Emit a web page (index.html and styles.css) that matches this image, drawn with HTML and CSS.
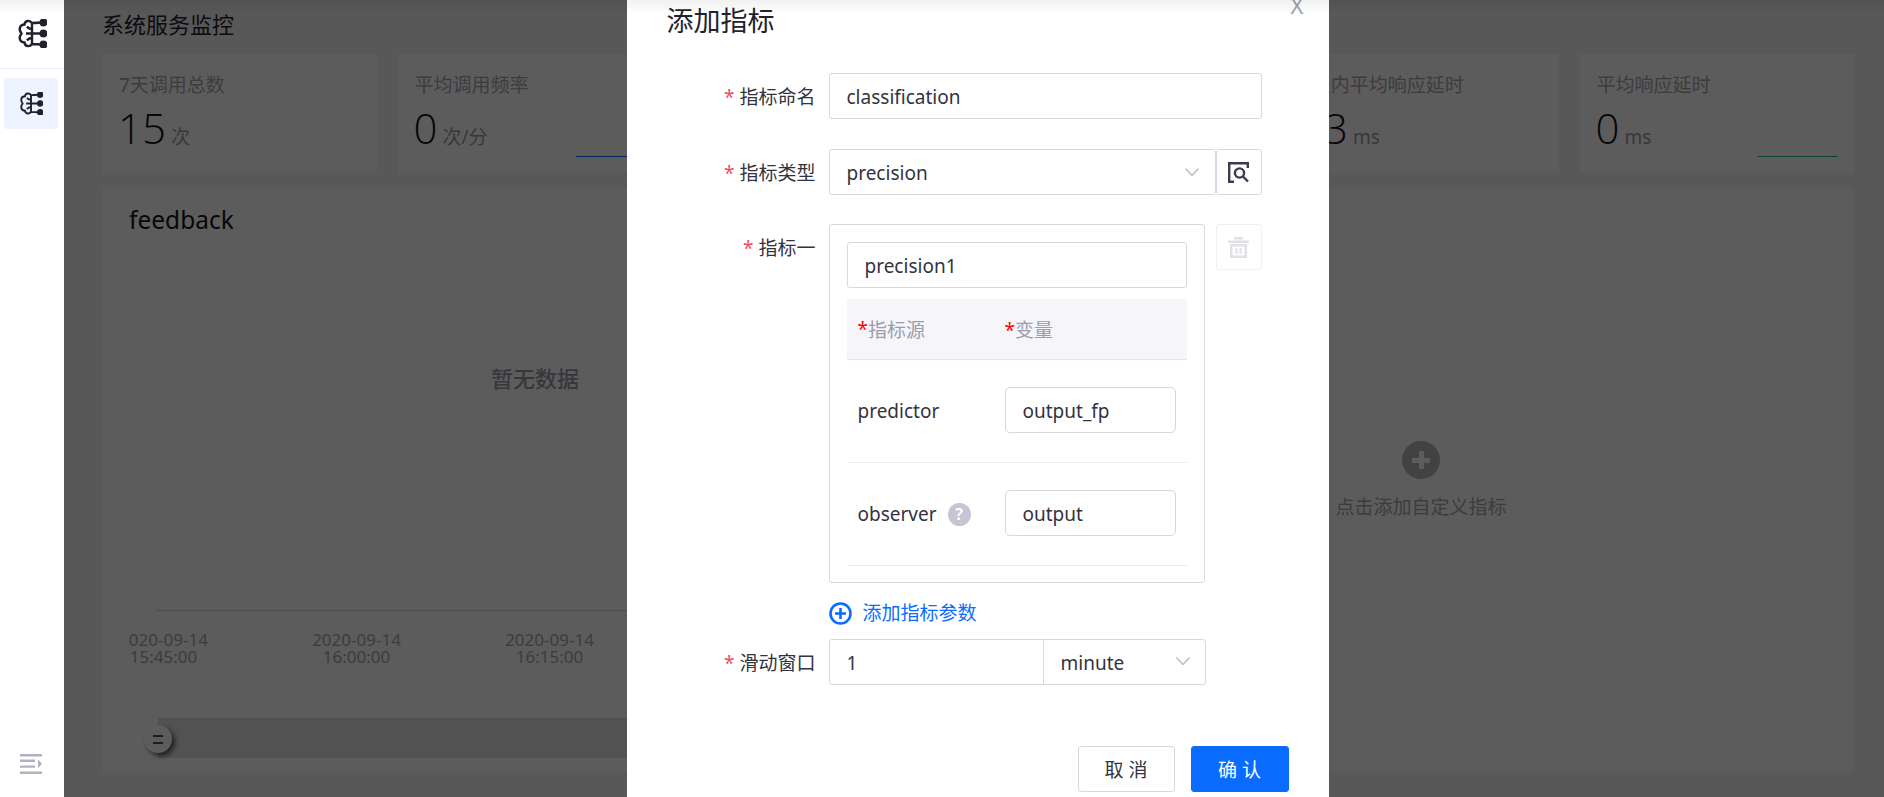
FILE: index.html
```html
<!DOCTYPE html>
<html lang="zh-CN">

<head>
  <meta charset="UTF-8">
  <title>系统服务监控</title>
  <link rel="stylesheet" href="styles.css">
</head>

<body>
  <div class="layout">
    <!-- Sidebar -->
    <aside class="sidebar">
      <div class="sidebar-logo">
        <svg class="brain brain-lg" viewBox="0 0 30 28"><path d="M15 3.500C13 .5 8 .5 7.500 5C3 5 1 9.500 4.500 14C1 18.500 3 23 7.500 23C8 27.500 13 27.500 15 24.500ZM15 9.500C12 9.500 11 8.500 10 7M15 18.500C12 18.500 11 19.500 10 21M15 3.500Q19 3.500 24 3M9 14H24M15 24.500Q19 24.500 24 25"/><circle cx="26.500" cy="3" r="2.800"/><circle cx="26.500" cy="14" r="2.800"/><circle cx="26.500" cy="25" r="2.800"/></svg>
      </div>
      <div class="sidebar-item">
        <svg class="brain" viewBox="0 0 30 28"><path d="M15 3.500C13 .5 8 .5 7.500 5C3 5 1 9.500 4.500 14C1 18.500 3 23 7.500 23C8 27.500 13 27.500 15 24.500ZM15 9.500C12 9.500 11 8.500 10 7M15 18.500C12 18.500 11 19.500 10 21M15 3.500Q19 3.500 24 3M9 14H24M15 24.500Q19 24.500 24 25"/><circle cx="26.500" cy="3" r="2.800"/><circle cx="26.500" cy="14" r="2.800"/><circle cx="26.500" cy="25" r="2.800"/></svg>
      </div>
      <svg class="sidebar-toggle" viewBox="0 0 22 20"><path d="M0 0H22V2.400H0ZM0 5.600H15V8H0ZM0 11.400H15V13.800H0ZM0 17.600H22V20H0ZM18 5.400L22 9.800L18 14.200Z"/></svg>
    </aside>

    <!-- Page behind the dialog -->
    <main class="main">
      <h1 class="page-title">系统服务监控</h1>

      <div class="stats">
        <div class="stat">
          <div class="stat-name">7天调用总数</div>
          <div class="stat-value">15<span class="stat-unit">次</span></div>
        </div>
        <div class="stat">
          <div class="stat-name">平均调用频率</div>
          <div class="stat-value">0<span class="stat-unit">次/分</span></div>
          <i class="spark spark-blue"></i>
        </div>
        <div class="stat"></div>
        <div class="stat"></div>
        <div class="stat">
          <div class="stat-name">7天内平均响应延时</div>
          <div class="stat-value">13<span class="stat-unit">ms</span></div>
        </div>
        <div class="stat">
          <div class="stat-name">平均响应延时</div>
          <div class="stat-value">0<span class="stat-unit">ms</span></div>
          <i class="spark spark-green"></i>
        </div>
      </div>

      <div class="panels">
        <section class="panel panel-chart">
          <h3 class="panel-title">feedback</h3>
          <div class="chart-empty">暂无数据</div>
          <div class="chart-axis"></div>
          <div class="chart-labels">
            <div class="chart-labels-row">
              <span>2020-09-14<br>15:45:00</span>
              <span>2020-09-14<br>16:00:00</span>
              <span>2020-09-14<br>16:15:00</span>
            </div>
          </div>
          <div class="chart-slider">
            <div class="slider-handle"><i></i><i></i></div>
          </div>
        </section>
        <section class="panel panel-add">
          <div class="add-circle"></div>
          <div class="add-text">点击添加自定义指标</div>
        </section>
      </div>
    </main>
  </div>

  <!-- Add metric dialog -->
  <div class="mask">
    <div class="modal">
      <h2 class="modal-title">添加指标</h2>
      <span class="modal-close">X</span>

      <div class="form-row">
        <label class="form-label"><em>*</em>指标命名</label>
        <div class="field field-full">classification</div>
      </div>

      <div class="form-row form-row-tight">
        <label class="form-label"><em>*</em>指标类型</label>
        <div class="field field-select">precision
          <svg class="chevron" viewBox="0 0 14 8"><path d="M.5 .5L7 7.500L13.500 .5"/></svg>
        </div>
        <button class="icon-btn">
          <svg class="icon-search" viewBox="0 0 21 21"><path d="M6 19.800H1.200V1.200H19.800V6"/><circle cx="11.500" cy="11" r="4.600"/><path d="M15 14.500L20 19.500"/></svg>
        </button>
      </div>

      <div class="form-row form-row-metric">
        <label class="form-label"><em>*</em>指标一</label>
        <div class="metric-box">
          <div class="field field-name">precision1</div>
          <div class="param-head">
            <span class="param-col"><b>*</b>指标源</span>
            <span><b>*</b>变量</span>
          </div>
          <div class="param-row">
            <span class="param-col">predictor</span>
            <div class="field field-param">output_fp</div>
          </div>
          <div class="param-row">
            <span class="param-col">observer<i class="help">?</i></span>
            <div class="field field-param">output</div>
          </div>
        </div>
        <button class="icon-btn icon-btn-off">
          <svg class="icon-trash" viewBox="0 0 21 21"><path d="M6 0H15V2.500H6ZM0 3.500H21V6H0ZM2 7H19V21H2ZM4.500 9.500V18.500H16.500V9.500ZM7.500 11H9.500V17H7.500ZM11.500 11H13.500V17H11.500Z" fill-rule="evenodd"/></svg>
        </button>
      </div>

      <a class="add-param">
        <svg class="icon-plus" viewBox="0 0 23 23"><circle cx="11.500" cy="11.500" r="10"/><path d="M11.500 6V17M6 11.500H17"/></svg>
        添加指标参数
      </a>

      <div class="form-row">
        <label class="form-label"><em>*</em>滑动窗口</label>
        <div class="window-group">
          <div class="window-count">1</div>
          <div class="window-unit">minute
            <svg class="chevron" viewBox="0 0 14 8"><path d="M.5 .5L7 7.500L13.500 .5"/></svg>
          </div>
        </div>
      </div>

      <div class="modal-footer">
        <button class="btn btn-cancel">取 消</button>
        <button class="btn btn-primary">确 认</button>
      </div>
    </div>
  </div>

  <div class="top-shade"></div>
</body>

</html>
```
FILE: styles.css
```css
* {
  box-sizing: border-box;
}

html,
body {
  margin: 0;
  height: 797px;
  overflow: hidden;
}

body {
  position: relative;
  font-family: "Noto Sans", "Noto Sans CJK SC", sans-serif;
  font-size: 19px;
  color: #333340;
  background: #f4f4f6;
}

.layout {
  display: flex;
  height: 797px;
}

/* sidebar */
.sidebar {
  position: relative;
  z-index: 2;
  flex: 0 0 64px;
  background: #fff;
}

.sidebar-logo {
  display: flex;
  align-items: center;
  justify-content: center;
  height: 69px;
  padding-bottom: 2px;
  border-bottom: 1px solid #ebebf2;
}

.sidebar-item {
  display: flex;
  align-items: center;
  justify-content: center;
  width: 54px;
  height: 51px;
  margin: 9px 0 0 4px;
  border-radius: 3px;
  background: #eef4ff;
}

.brain {
  width: 24px;
  height: 23px;
  fill: #22222c;
  stroke: #22222c;
  stroke-width: 2.400;
}

.brain path {
  fill: none;
}

.brain-lg {
  width: 30px;
  height: 29px;
}

.sidebar-toggle {
  position: absolute;
  left: 20px;
  top: 754px;
  width: 22px;
  height: 20px;
  fill: #b1b1c4;
}

/* page behind the dialog */
.main {
  flex: 1;
  padding: 0 30px 0 38px;
}

.page-title {
  margin: 0;
  height: 54px;
  font-size: 22px;
  font-weight: 400;
  line-height: 48px;
  color: #24242c;
}

.stats {
  display: flex;
  gap: 21px;
}

.stat {
  position: relative;
  flex: 1;
  height: 119px;
  padding: 17px 17px;
  background: #fff;
}

.stat-name {
  font-size: 19px;
  line-height: 28px;
  color: #a6a6b0;
}

.stat-value {
  margin-top: 5px;
  margin-left: -1px;
  font-family: "Open Sans", "Noto Sans CJK SC", sans-serif;
  font-size: 42px;
  font-weight: 300;
  line-height: 48px;
  color: #14141c;
}

.stat-unit {
  margin-left: 5px;
  font-family: "Noto Sans", "Noto Sans CJK SC", sans-serif;
  font-size: 19px;
  font-weight: 400;
  color: #9a9aa4;
}

.spark {
  position: absolute;
  right: 16px;
  top: 102px;
  width: 80px;
  height: 1px;
}

.spark-blue {
  background: #0a6cff;
}

.spark-green {
  background: #16c784;
}

.panels {
  display: flex;
  gap: 20px;
  height: 584px;
  margin-top: 15px;
}

.panel {
  background: #fff;
}

.panel-chart {
  position: relative;
  flex: 0 0 866px;
  padding: 16px 28px 0 27px;
  overflow: hidden;
}

.panel-title {
  margin: 0;
  font-size: 24.500px;
  font-weight: 400;
  line-height: 32px;
  color: #14141c;
}

.chart-empty {
  margin-top: 127px;
  padding-left: 362px;
  font-size: 22px;
  font-weight: 500;
  line-height: 30px;
  color: #9a9aa4;
}

.chart-axis {
  height: 1px;
  margin: 217px 0 0 27px;
  background: #d9d9e0;
}

.chart-labels {
  overflow: hidden;
  margin-top: 20px;
}

.chart-labels-row {
  display: flex;
  margin-left: -62px;
  font-size: 17px;
  line-height: 17px;
  color: #a6a6b0;
  text-align: center;
}

.chart-labels-row span {
  flex: 0 0 193px;
}

.chart-slider {
  position: relative;
  height: 40px;
  margin: 53px 0 0 29px;
  background: #e2e2e6;
}

.slider-handle {
  position: absolute;
  left: -14px;
  top: 7px;
  display: flex;
  flex-direction: column;
  align-items: center;
  justify-content: center;
  gap: 5px;
  width: 28px;
  height: 28px;
  border-radius: 50%;
  background: #fff;
  box-shadow: 3px 3px 5px rgba(0, 0, 0, 0.6);
}

.slider-handle i {
  width: 10px;
  height: 2px;
  background: #555;
}

.panel-add {
  display: flex;
  flex-direction: column;
  align-items: center;
  flex: 1;
  padding-top: 253px;
}

.add-circle {
  position: relative;
  width: 38px;
  height: 38px;
  border-radius: 50%;
  background: #b6b6c0;
}

.add-circle::before,
.add-circle::after {
  content: "";
  position: absolute;
  left: 10px;
  top: 17px;
  width: 18px;
  height: 5px;
  background: #fff;
}

.add-circle::after {
  left: 17px;
  top: 10px;
  width: 5px;
  height: 18px;
}

.add-text {
  margin-top: 14px;
  font-size: 19px;
  line-height: 28px;
  color: #a6a6b0;
}

/* dialog */
.mask {
  position: absolute;
  left: 64px;
  top: 0;
  right: 0;
  bottom: 0;
  z-index: 1;
  display: flex;
  justify-content: center;
  padding-left: 7px;
  background: rgba(0, 0, 0, 0.64);
}

.modal {
  position: relative;
  width: 702px;
  height: 797px;
  background: #fff;
  overflow: hidden;
}

.modal-title {
  margin: 0;
  height: 73px;
  padding: 3px 0 0 40px;
  font-size: 27px;
  font-weight: 400;
  line-height: 36px;
  color: #22222c;
}

.modal-close {
  position: absolute;
  right: 25px;
  top: -10px;
  font-size: 22px;
  line-height: 30px;
  color: #a0a0ae;
}

.form-row {
  display: flex;
  margin-bottom: 30px;
}

.form-row-tight {
  margin-bottom: 29px;
}

.form-row-metric {
  margin-bottom: 0;
}

.form-label {
  flex: 0 0 189px;
  height: 46px;
  margin-right: 13px;
  line-height: 48px;
  text-align: right;
  color: #333340;
}

.form-label em {
  margin-right: 5px;
  font-style: normal;
  color: #f5475b;
}

.field {
  height: 46px;
  padding: 0 17px;
  border: 1px solid #d8d8e2;
  border-radius: 3px;
  line-height: 46px;
  color: #333340;
}

.field-full {
  width: 433px;
}

.field-select {
  position: relative;
  width: 387px;
}

.chevron {
  position: absolute;
  right: 16px;
  top: 18px;
  width: 14px;
  height: 8px;
  fill: none;
  stroke: #b4b4c2;
  stroke-width: 1.200;
}

.icon-btn {
  display: flex;
  align-items: center;
  justify-content: center;
  width: 46px;
  height: 46px;
  padding: 0;
  border: 1px solid #d8d8e2;
  border-radius: 3px;
  background: #fff;
}

.icon-btn-off {
  margin-left: 11px;
  border-color: #efeff4;
}

.icon-search {
  width: 21px;
  height: 21px;
  fill: none;
  stroke: #3c3c4c;
  stroke-width: 2.400;
}

.icon-trash {
  width: 21px;
  height: 21px;
  fill: #e0e0e8;
}

.metric-box {
  width: 376px;
  height: 359px;
  padding: 17px 17px 0;
  border: 1px solid #d8d8e2;
  border-radius: 3px;
}

.param-head {
  display: flex;
  align-items: center;
  height: 61px;
  margin-top: 11px;
  padding-left: 11px;
  background: #f5f5fa;
  border-bottom: 1px solid #e4e4ea;
  color: #9c9cac;
}

.param-head b {
  font-weight: 400;
  color: #f00;
}

.param-col {
  display: flex;
  align-items: center;
  flex: 0 0 147px;
}

.param-row {
  display: flex;
  align-items: center;
  height: 103px;
  padding-left: 11px;
  border-bottom: 1px solid #e9e9ee;
}

.field-param {
  width: 171px;
  margin-bottom: 2px;
  border-color: #d8d8dc;
  border-radius: 5px;
}

.help {
  width: 23px;
  height: 23px;
  margin-left: 11px;
  border-radius: 50%;
  background: #c5c5d5;
  font-size: 16px;
  font-style: normal;
  font-weight: 700;
  line-height: 23px;
  text-align: center;
  color: #fff;
}

.add-param {
  display: flex;
  align-items: center;
  gap: 11px;
  height: 24px;
  margin: 18px 0 14px 202px;
  line-height: 24px;
  color: #0a6cff;
}

.icon-plus {
  width: 23px;
  height: 23px;
  fill: none;
  stroke: #0a6cff;
  stroke-width: 2.600;
}

.window-group {
  display: flex;
  width: 377px;
  height: 46px;
  border: 1px solid #d8d8e2;
  border-radius: 3px;
  line-height: 46px;
}

.window-count {
  width: 214px;
  padding-left: 17px;
  border-right: 1px solid #d8d8e2;
}

.window-unit {
  position: relative;
  flex: 1;
  padding-left: 17px;
}

.window-unit .chevron {
  right: 15px;
  top: 17px;
}

.modal-footer {
  display: flex;
  justify-content: flex-end;
  gap: 16px;
  margin-top: 61px;
  padding-right: 40px;
}

.btn {
  width: 98px;
  height: 46px;
  padding: 0;
  border: 1px solid #d8d8e2;
  border-radius: 3px;
  background: #fff;
  font-family: inherit;
  font-size: 19px;
  color: #333340;
}

.btn-cancel {
  width: 97px;
}

.btn-primary {
  border-color: #0a6cff;
  background: #0a6cff;
  color: #fff;
}

.top-shade {
  position: absolute;
  left: 0;
  top: 0;
  right: 0;
  z-index: 3;
  height: 14px;
  background: linear-gradient(rgba(0, 0, 0, 0.06), rgba(0, 0, 0, 0));
}
```
